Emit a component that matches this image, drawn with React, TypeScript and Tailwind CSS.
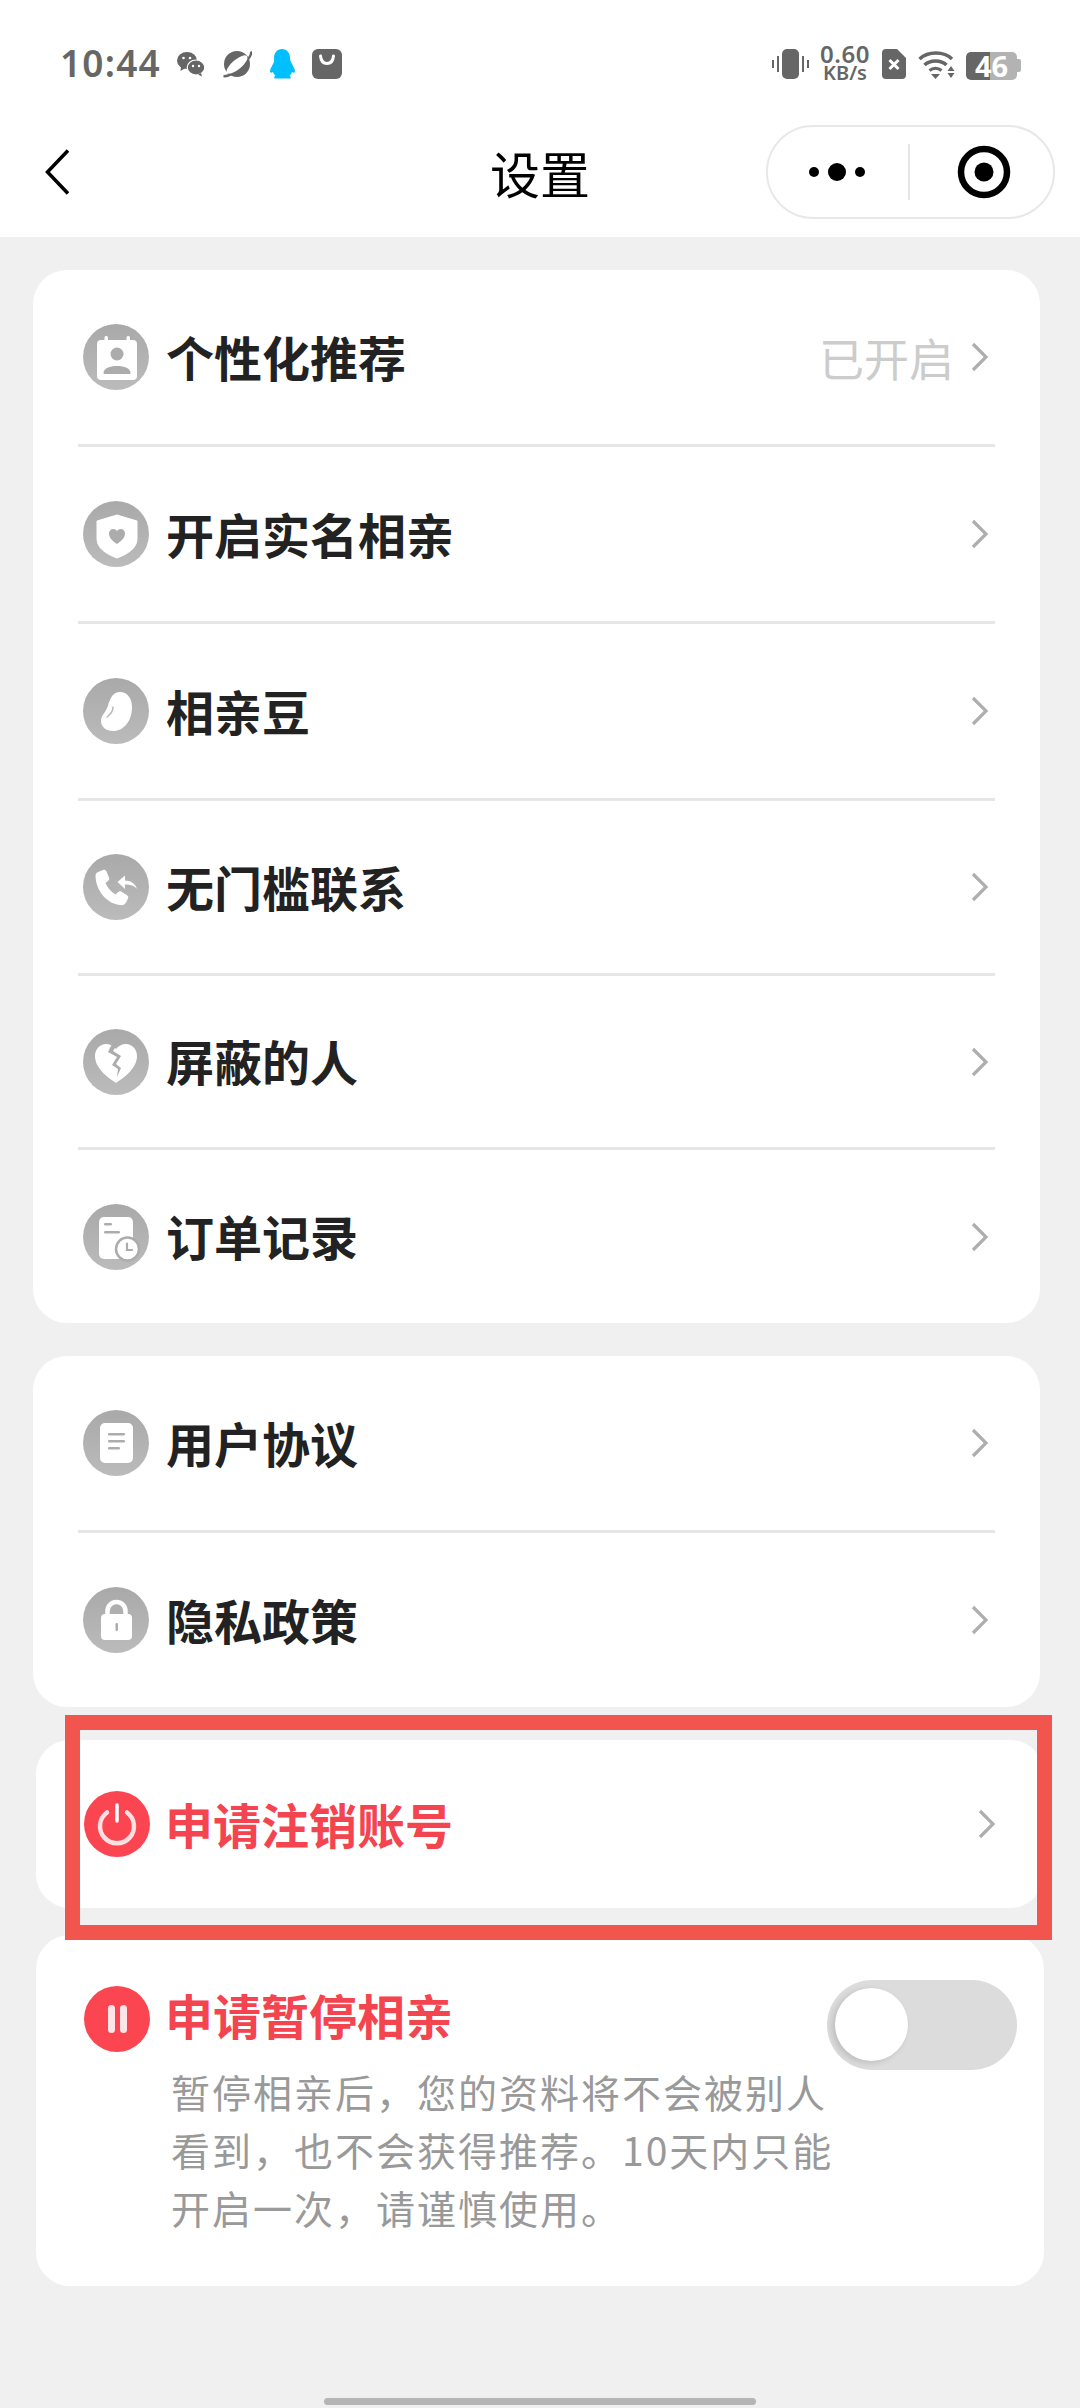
import type { ReactNode } from 'react'

const G = '#acacac'

function GrayCircle({ children }: { children: ReactNode }) {
  return (
    <div className="w-[66px] h-[66px] shrink-0 rounded-full bg-gradient-to-b from-[#a9a9a9] to-[#bbbbbb]">
      <svg viewBox="0 0 66 66" className="w-full h-full">
        {children}
      </svg>
    </div>
  )
}

const icons: Record<string, ReactNode> = {
  person: (
    <>
      <rect x="14" y="16" width="40" height="40" rx="4" fill="#fff" />
      <rect x="21.5" y="12" width="3.5" height="7" rx="1.5" fill="#fff" />
      <rect x="43.5" y="12" width="3.5" height="7" rx="1.5" fill="#fff" />
      <circle cx="34" cy="30" r="6.5" fill={G} />
      <path d="M20.5 49c0-4.500 6-7 13.500-7s13.500 2.500 13.500 7c0 .6-.4 1-1 1H21.500c-.6 0-1-.4-1-1z" fill={G} />
    </>
  ),
  shield: (
    <>
      <path d="M34 14l20 6v18c0 9-9 15-20 19-11-4-20-10-20-19V20z" fill="#fff" strokeLinejoin="round" stroke="#fff" strokeWidth="1" />
      <path d="M34 43c-5-3.500-8-6.500-8-10.500 0-2.800 2-4.500 4.300-4.500 1.600 0 2.900.8 3.700 2.100.8-1.300 2.100-2.100 3.700-2.100 2.300 0 4.300 1.700 4.300 4.500 0 4-3 7-8 10.500z" fill={G} />
    </>
  ),
  bean: (
    <>
      <path d="M37 14c7 0 12 6 12 15 0 14-8 24-19 24-7 0-12-4-12-10 0-5 3-7 5-11 2-3 2-6 4-10 2-5 5-8 10-8z" fill="#fff" />
      <path d="M30 29c0 4-2 7-6 10" fill="none" stroke="#b8b8b8" strokeWidth="1.500" strokeLinecap="round" />
    </>
  ),
  phone: (
    <>
      <path d="M15 18l5-2c1.500-.5 2.800 0 3.500 1.500l2.500 6c.5 1.300.2 2.400-.8 3.300l-2.700 2.200c1.800 4.500 5.500 9 10 11.500l2.700-2.500c1-.9 2.200-1 3.300-.3l5.500 3.500c1.300.8 1.600 2 1 3.300l-2 4c-1 2-3 3-5.500 2.500C24 50 13 37 12.500 22c0-2 1-3.300 2.500-4z" fill="#fff" />
      <path d="M42 21.500v5c6 0 10 3 12 8.500-3-3.500-7-4.500-12-4.500v4.500L34.500 28z" fill="#fff" />
    </>
  ),
  heart: (
    <>
      <path d="M33 54C24 48 12 39 12 27c0-7 5-12 11-12 4 0 8 2 10 5 2-3 6-5 10-5 6 0 11 5 11 12 0 12-12 21-21 27z" fill="#fff" />
      <path d="M30 13l-5 10 9 5-5 8 6 4-1 8 4-9-5-4 5-8-8-5 5-8z" fill={G} />
    </>
  ),
  order: (
    <>
      <rect x="16" y="13" width="34" height="42" rx="5" fill="#fff" />
      <rect x="21" y="19" width="8" height="2.500" rx="1.200" fill={G} />
      <rect x="21" y="27" width="16" height="2.500" rx="1.200" fill={G} />
      <circle cx="44.500" cy="45" r="11.500" fill="#fff" stroke={G} strokeWidth="2.500" />
      <path d="M44 39.500v6.500h5" fill="none" stroke={G} strokeWidth="2.200" strokeLinecap="round" />
    </>
  ),
  doc: (
    <>
      <rect x="17" y="13" width="33" height="40" rx="5" fill="#fff" />
      <rect x="25" y="23" width="17" height="2.500" rx="1.200" fill={G} />
      <rect x="25" y="30" width="17" height="2.500" rx="1.200" fill={G} />
      <rect x="25" y="37" width="12" height="2.500" rx="1.200" fill={G} />
    </>
  ),
  lock: (
    <>
      <path d="M24.500 30v-6c0-5 4-9 9-9s9 4 9 9v6" fill="none" stroke="#fff" strokeWidth="4.500" />
      <rect x="18" y="27" width="31" height="26" rx="4" fill="#fff" />
      <rect x="32.500" y="36" width="2.500" height="8" rx="1.200" fill={G} />
    </>
  ),
}

function Chevron({ className }: { className: string }) {
  return (
    <svg viewBox="0 0 18 30" className={`w-[18px] h-[30px] shrink-0 ${className}`}>
      <path d="M2 2l13 13L2 28" fill="none" stroke="#aeaeae" strokeWidth="3.200" />
    </svg>
  )
}

function Row({ icon, label, value, h }: { icon: string; label: string; value?: string; h: string }) {
  return (
    <div className={`flex items-center pl-[50px] pr-[51px] ${h}`}>
      <GrayCircle>{icons[icon]}</GrayCircle>
      <span className="ml-[17px] -mt-[3px] text-[48px] leading-none font-bold text-[#222222]">{label}</span>
      {value && <span className="ml-auto mr-[17px] text-[45px] leading-none text-[#cccccc]">{value}</span>}
      <Chevron className={value ? '' : 'ml-auto'} />
    </div>
  )
}

function Divider() {
  return <div className="mx-[45px] h-[3px] bg-[#e6e6e6]" />
}

function StatusBar() {
  return (
    <div className="h-[100px] flex items-start pt-[46px] pl-[60px] pr-[59px] text-[#666666]">
      <span className="text-[37px] leading-[34px] font-semibold tracking-[1.200px] font-['Noto_Sans']">10:44</span>
      {/* notification icons */}
      <svg viewBox="0 0 30 26" className="w-[30px] h-[26px] ml-[15px] mt-[5px]" fill="#666666">
        <ellipse cx="11" cy="9.500" rx="10" ry="8.500" />
        <path d="M5 15l-.5 5 5-3z" />
        <ellipse cx="20" cy="16.500" rx="8.800" ry="7.500" stroke="#fff" strokeWidth="1.200" />
        <path d="M25 22l1 3.500-4-2z" />
        <circle cx="7.500" cy="7" r="1.300" fill="#fff" />
        <circle cx="14" cy="7" r="1.300" fill="#fff" />
        <circle cx="17" cy="15" r="1.200" fill="#fff" />
        <circle cx="23" cy="15" r="1.200" fill="#fff" />
      </svg>
      <svg viewBox="0 0 30 28" className="w-[30px] h-[28px] ml-[16px] mt-[4px]">
        <circle cx="15" cy="14" r="13" fill="#666666" />
        <path d="M1.500 26C6 27 14 22 20 16s10-12 9-14.500" fill="none" stroke="#666666" strokeWidth="2.500" />
        <ellipse cx="15" cy="14.500" rx="13" ry="4.800" transform="rotate(-40 15 14.500)" fill="#fff" />
      </svg>
      <svg viewBox="0 0 26 30" className="w-[26px] h-[30px] ml-[17px] mt-[3px]" fill="#00bfff">
        <path d="M13 0c5 0 8 4 8 9 0 2 .5 3 1.500 5 1.500 3 3.500 6 3.500 8.500 0 1.500-1.500 1.500-3 .5-.5 1.500-1 2.500-2.500 3.500 1 .5 1.500 1.500 1 3H5.500c-.5-1.500 0-2.500 1-3C5 25.500 4.500 24.500 4 23c-1.500 1-3 1-3-.5C1 20 3 17 4.500 14 5.500 12 5 11 5 9c0-5 3-9 8-9z" />
      </svg>
      <svg viewBox="0 0 30 30" className="w-[30px] h-[30px] ml-[17px] mt-[3px]">
        <rect width="30" height="30" rx="6" fill="#666666" />
        <path d="M8.500 7c.5 5 3 7.500 6.500 7.500S21 12 21.500 7" fill="none" stroke="#fff" strokeWidth="3" strokeLinecap="round" />
      </svg>
      {/* system icons */}
      <svg viewBox="0 0 37 30" className="w-[37px] h-[30px] ml-auto mt-[3px]" fill="#666666">
        <rect x="10" y="0" width="17" height="30" rx="5" />
        <rect x="0" y="11" width="2" height="8" />
        <rect x="5" y="7" width="2" height="16" />
        <rect x="30" y="7" width="2" height="16" />
        <rect x="35" y="11" width="2" height="8" />
      </svg>
      <div className="w-[48px] ml-[12px] -mt-[2px] flex flex-col items-center font-['Noto_Sans'] font-semibold">
        <span className="text-[24px] leading-[20px] tracking-[0.500px]">0.60</span>
        <span className="text-[20px] leading-[17px]">KB/s</span>
      </div>
      <svg viewBox="0 0 24 30" className="w-[24px] h-[30px] ml-[13px] mt-[3px]">
        <path d="M4 0h11l9 9v17a4 4 0 0 1-4 4H4a4 4 0 0 1-4-4V4a4 4 0 0 1 4-4z" fill="#666666" />
        <path d="M7.500 11l9 9m0-9l-9 9" stroke="#fff" strokeWidth="3" />
      </svg>
      <svg viewBox="0 0 37 30" className="w-[37px] h-[30px] ml-[12px] mt-[4px]" fill="none" stroke="#666666">
        <path d="M1.500 9C10 1 26 1 34 9" strokeWidth="3.500" />
        <path d="M6.500 15C12 9.500 23 9.500 28.500 15" strokeWidth="3.500" />
        <path d="M11.500 20.500C15 17.500 20 17.500 23.500 20.500" strokeWidth="3" />
        <path d="M13 24h9l-4.500 5z" fill="#666666" stroke="none" />
        <path d="M33 16l3.500 5h-7zM29.500 23h7L33 28z" fill="#666666" stroke="none" />
      </svg>
      <div className="relative w-[55px] h-[28px] ml-[11px] mt-[6px] flex">
        <div className="w-[24px] h-full rounded-l-[5px] bg-[#666666]" />
        <div className="w-[27px] h-full rounded-r-[5px] bg-[#b3b3b3]" />
        <div className="w-[4px] h-[13px] mt-[7px] rounded-r-[2px] bg-[#b3b3b3]" />
        <span className="absolute left-[9px] top-0 text-[29px] leading-[28px] font-bold text-white font-['Noto_Sans']">46</span>
      </div>
    </div>
  )
}

function NavBar() {
  return (
    <div className="h-[137px] relative flex items-start">
      <svg viewBox="0 0 24 46" className="w-[24px] h-[46px] ml-[45px] mt-[49px]">
        <path d="M23 1.500L2.500 23 23 44.500" fill="none" stroke="#000" strokeWidth="3.500" />
      </svg>
      <span className="absolute left-[490px] top-[47px] text-[50px] leading-none text-black">设置</span>
      <div className="ml-auto mr-[25px] mt-[25px] w-[289px] h-[94px] rounded-full border-[2.500px] border-[#e8e8e8] flex items-center">
        <svg viewBox="0 0 60 20" className="w-[60px] h-[20px] ml-[41px]" fill="#000">
          <circle cx="5" cy="10" r="5" />
          <circle cx="28" cy="10" r="9" />
          <circle cx="51" cy="10" r="5" />
        </svg>
        <div className="ml-[39px] w-[2px] h-[56px] bg-[#e5e5e5]" />
        <svg viewBox="0 0 54 54" className="w-[54px] h-[54px] ml-[47px]">
          <circle cx="27" cy="27" r="23" fill="none" stroke="#000" strokeWidth="6.500" />
          <circle cx="27" cy="27" r="9.500" fill="#000" />
        </svg>
      </div>
    </div>
  )
}

function App() {
  return (
    <div className="w-[1080px] h-[2408px] flex flex-col bg-[#f0f0f0] overflow-hidden font-['Noto_Sans_CJK_SC',sans-serif]">
      <header className="h-[237px] shrink-0 bg-white">
        <StatusBar />
        <NavBar />
      </header>

      <div className="ml-[33px] mt-[33px] w-[1007px] rounded-[34px] bg-white">
        <Row h="h-[174px]" icon="person" label="个性化推荐" value="已开启" />
        <Divider />
        <Row h="h-[174px]" icon="shield" label="开启实名相亲" />
        <Divider />
        <Row h="h-[174px]" icon="bean" label="相亲豆" />
        <Divider />
        <Row h="h-[172px]" icon="phone" label="无门槛联系" />
        <Divider />
        <Row h="h-[171px]" icon="heart" label="屏蔽的人" />
        <Divider />
        <Row h="h-[173px]" icon="order" label="订单记录" />
      </div>

      <div className="ml-[33px] mt-[33px] w-[1007px] rounded-[34px] bg-white">
        <Row h="h-[174px]" icon="doc" label="用户协议" />
        <Divider />
        <Row h="h-[174px]" icon="lock" label="隐私政策" />
      </div>

      <div className="relative ml-[36px] mt-[33px] w-[1008px] h-[168px] rounded-[34px] bg-white flex items-center pl-[48px] pr-[48px]">
        <div className="w-[66px] h-[66px] shrink-0 rounded-full bg-[#fb4551]">
          <svg viewBox="0 0 66 66" className="w-full h-full" fill="none" stroke="#ffdfe1" strokeLinecap="round">
            <path d="M23 21.500a17 17 0 1 0 20 0" strokeWidth="4.500" />
            <path d="M33 14v16" stroke="#ffffff" strokeWidth="3.500" />
          </svg>
        </div>
        <span className="ml-[15px] -mt-[3px] text-[48px] leading-none font-bold text-[#f4444f]">申请注销账号</span>
        <Chevron className="ml-auto" />
        {/* red annotation frame over the row */}
        <div className="absolute z-10 left-[29px] -right-[8px] -top-[25px] -bottom-[32px] border-[15px] border-[#f2544e]" />
      </div>

      <div className="ml-[36px] mt-[27px] w-[1008px] h-[351px] rounded-[34px] bg-white pl-[48px] pr-[27px] pt-[51px]">
        <div className="flex items-start">
          <div className="w-[66px] h-[66px] shrink-0 rounded-full bg-[#fb4551] flex items-center justify-center gap-[5px]">
            <div className="w-[7px] h-[28px] rounded-full bg-[#ffe5e7]" />
            <div className="w-[7px] h-[28px] rounded-full bg-[#ffe5e7]" />
          </div>
          <span className="ml-[15px] mt-[4px] text-[48px] leading-none font-bold text-[#f4444f]">申请暂停相亲</span>
          <div className="relative ml-auto -mt-[6px] w-[190px] h-[90px] rounded-full bg-[#dcdcdc]">
            <div className="absolute left-[8px] top-[8px] w-[73px] h-[73px] rounded-full bg-white shadow-[-3px_2px_6px_rgba(0,0,0,0.14)]" />
          </div>
        </div>
        <p className="ml-[87px] -mt-[8px] w-[680px] text-[39px] leading-[58px] tracking-[2px] text-[#999999]">
          暂停相亲后，您的资料将不会被别人
          <br />
          看到，也不会获得推荐。10天内只能
          <br />
          开启一次，请谨慎使用。
        </p>
      </div>

      <div className="mt-auto mb-[3px] mx-auto w-[432px] h-[7px] rounded-full bg-[#b5b5b5]" />
    </div>
  )
}

export default App
